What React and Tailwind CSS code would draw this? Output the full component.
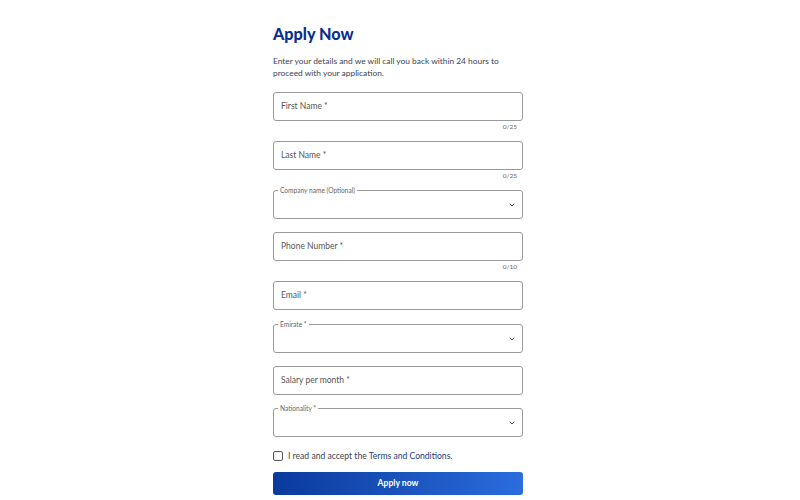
import { ChevronDown } from "lucide-react";

const TextField = ({ label, count, gap = "mb-[13px]" }) => {
  return (
    <div className={count ? "" : gap}>
      <div className="h-[29px] border border-[#9a9a9a] rounded-[3px] flex items-center px-[7px] text-[8.5px] text-[#555]">
        {label}
      </div>
      {count && (
        <div className="h-[20px] pt-[2px] text-right pr-[6px] text-[6.5px] leading-[8px] text-[#666]">{count}</div>
      )}
    </div>
  );
};

const SelectField = ({ label }) => {
  return (
    <div className="mb-[13px] relative">
      <div className="h-[29px] border border-[#9a9a9a] rounded-[3px] flex items-center justify-end pr-[6px]">
        <ChevronDown size={8} strokeWidth={3} className="text-[#444]" />
      </div>
      <span className="absolute left-[5px] -top-[4px] bg-white px-[2px] text-[6.6px] leading-[8px] text-[#666]">{label}</span>
    </div>
  );
};

export default function App() {
  return (
    <div className="w-[800px] h-[500px] bg-white overflow-hidden" style={{ fontFamily: "Lato, 'Open Sans', sans-serif" }}>
      <div className="ml-[273px] w-[250px] pt-[24px]">
        <h1 className="text-[16.2px] leading-[20px] font-black text-[#0b2f8d]">Apply Now</h1>
        <p className="mt-[11px] text-[8.4px] leading-[12px] text-[#3c4350]">
          Enter your details and we will call you back within 24 hours to proceed with your application.
        </p>
        <div className="mt-[13px]">
          <TextField label="First Name *" count="0/25" />
          <TextField label="Last Name *" count="0/25" />
          <SelectField label="Company name (Optional)" />
          <TextField label="Phone Number *" count="0/10" />
          <TextField label="Email *" gap="mb-[14px]" />
          <SelectField label="Emirate *" />
          <TextField label="Salary per month *" />
          <SelectField label="Nationality *" />
        </div>
        <div className="mt-[7px] flex items-center gap-[5px]">
          <div className="w-[10px] h-[10px] border border-[#555] rounded-[2px]" />
          <span className="text-[8.6px] text-[#3c4350]">
            I read and accept the <span className="text-[#1d3a7a]">Terms and Conditions.</span>
          </span>
        </div>
        <button className="mt-[9px] w-full h-[23px] rounded-[3px] bg-gradient-to-r from-[#0a3a9c] to-[#2b6cdd] text-white text-[8.6px] font-bold">
          Apply now
        </button>
      </div>
    </div>
  );
}
